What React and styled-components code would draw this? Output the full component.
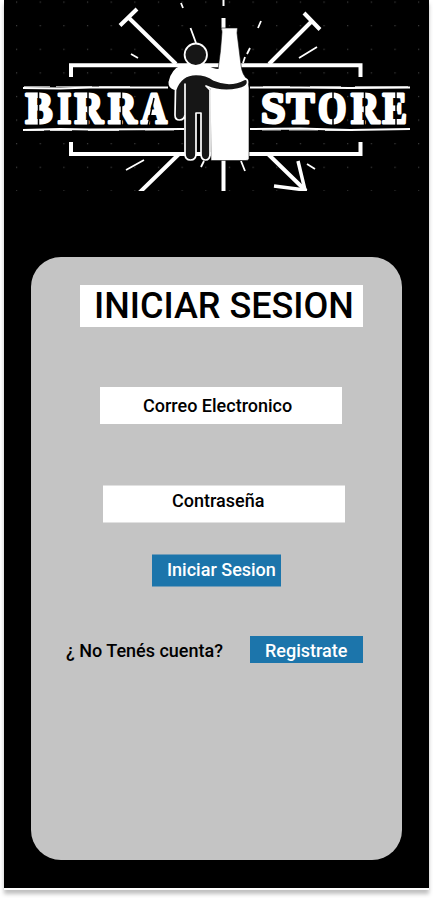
import React from "react";
import styled, { createGlobalStyle } from "styled-components";

const GlobalStyle = createGlobalStyle`
  * { box-sizing: border-box; }
  html { background: #fff; }
  body { margin: 0; font-family: Roboto, sans-serif; }
`;

const Page = styled.div`
  width: 433px;
  height: 898px;
  padding: 0 4px 8px;
  background: #fff;
  overflow: hidden;
`;

const Screen = styled.main`
  width: 425px;
  height: 890px;
  background: #000;
  border-bottom: 2px solid #fff;
  box-shadow: 0 4px 4px rgba(0, 0, 0, 0.25);
  display: flex;
  flex-direction: column;
`;

const Banner = styled.svg`
  display: block;
  width: 425px;
  height: 191px;
  flex: none;
`;

const Card = styled.form`
  width: 371px;
  height: 603px;
  margin: 66px 0 0 27px;
  border-radius: 30px;
  background: #c4c4c4;
  display: flex;
  flex-direction: column;
  align-items: flex-start;
  padding-top: 28px;
`;

const Title = styled.h1`
  margin: 0 0 0 49px;
  width: 283px;
  height: 42px;
  padding-left: 14px;
  background: #fff;
  font-size: 36px;
  font-weight: 500;
  line-height: 42px;
  white-space: nowrap;
`;

const Field = styled.label`
  width: 242px;
  height: ${(p) => p.$h}px;
  margin: ${(p) => p.$margin};
  padding-left: ${(p) => p.$indent}px;
  border: solid #e1e1e1;
  border-width: ${(p) => (p.$edged ? "1px 0" : "0")};
  background: #fff;
  font-size: 18px;
  font-weight: 500;
  line-height: ${(p) => p.$line}px;
`;

const Button = styled.button`
  width: ${(p) => p.$w}px;
  height: ${(p) => p.$h}px;
  margin: ${(p) => p.$margin || 0};
  padding: 0 0 0 15px;
  border: solid #709cb8;
  border-width: ${(p) => (p.$edged ? "1px 0" : "0")};
  background: #1c75ab;
  color: #fff;
  font: 500 18px/${(p) => p.$line}px Roboto, sans-serif;
  text-align: left;
  white-space: nowrap;
  display: flex;
  align-items: flex-start;
`;

const SignupRow = styled.div`
  display: flex;
  width: 100%;
  margin-top: 49px;
  padding-left: 35px;
`;

const Prompt = styled.span`
  width: 184px;
  font-size: 18px;
  font-weight: 500;
  line-height: 30px;
`;

const Lettering = styled.text`
  font-family: "Liberation Serif", serif;
  font-weight: 700;
  font-size: 45px;
  fill: #fff;
  stroke: #fff;
  stroke-width: 3;
  stroke-linejoin: round;
`;

const glyphs = [
  ["B", 25.5, 0.9], ["I", 57.5, 0.78], ["R", 74.5, 0.88], ["R", 108, 0.88], ["A", 141, 0.8],
  ["S", 261, 0.98], ["T", 286.5, 0.93], ["O", 318, 0.81], ["R", 351, 0.87], ["E", 382.5, 0.81],
];

function Logo() {
  return (
    <Banner viewBox="4 0 425 191" role="img" aria-label="Birra Store">
      <defs>
        <pattern id="dots" x="16" y="1.5" width="23.65" height="23.6" patternUnits="userSpaceOnUse">
          <rect x="0" y="0" width="1.2" height="1.2" fill="#404040" />
        </pattern>
      </defs>
      <rect x="4" width="425" height="191" fill="#000" />
      <rect x="4" width="425" height="191" fill="url(#dots)" />
      <g fill="none" stroke="#fff" strokeWidth="4">
        <path d="M71 77V65.3H360.500V77M71 142V154H360.500V142" />
        <path d="M129 18L176 64M120 25.500L137 9M311 22L269 64M304 13L320 29.500" />
        <path d="M179 154L139 193M223.500 160V191M223.500 18V30M268 154L306 191" />
        <path d="M298 161L305 190L274 186" strokeWidth="3.500" />
        <path d="M223.500 0V6" strokeWidth="2" />
        <path d="M131 54L138 58M126 170L144 160M299 58L317 47M307 164L315 169M181 3L183 8M190.500 28L196 43M261 21L258 28M250 48L247 54M245 57L243 63M204 161L201 167M241 161L245 171" strokeWidth="1.8" />
      </g>
      <g stroke="#fff" fill="none">
        <path d="M23 88L60 88.500L90 87.500L168 87.500M250 87.500L300 87.500L350 88L410 87.500M23 130L60 129L90 129.500L184 129M250 129L300 128.500L350 130L410 129" strokeWidth="2" />
        <path d="M24 86.700H50M56 86.700H92M99 86.700H130M263 86.700H290M310 86.700H341M355 86.700H408M26 130.500H44M50 130.500H72M88 130.500H119M145 130H174M262 130H281M289 130H318M325 130.500H353" strokeWidth="0.8" />
      </g>
      {glyphs.map(([letter, x, scale], i) => (
        <Lettering key={i} transform={`translate(${x} 123.300) scale(${scale} 1)`}>{letter}</Lettering>
      ))}
      <g fill="none" stroke="#000" strokeWidth="1.5">
        <path d="M38.500 91V126M88 91V126M121.500 91V126M333 91V126M364.500 91V126M396 91V126M148 126L154 98" />
      </g>
      <path d="M221.500 28H237.500L237 33L241 65Q242 75 248 80L249 88V159Q248 160.500 246 160.500H211L210 82L218 70Q221 50 222 32Z" fill="#fff" stroke="#111" strokeWidth="0.6" />
      <path d="M174.500 90Q168 88 168.500 82Q171 69 182 65Q196 60 207 65Q213 69 219 69L224 85Q207 79 197 76Q185 77 181 84Q178 89 174.500 90Z" fill="#fff" />
      <circle cx="195.800" cy="54.700" r="11.200" fill="#161616" stroke="#fff" strokeWidth="1.800" />
      <path d="M175.500 90Q181 74.500 196 74.500Q206 74.500 214 80Q230 87 244 79.500Q248 78 247.500 83Q247 87 238 89Q222 93 206 86L210 90V154Q210 160 205.500 160Q201 160 201 154V113H196V154Q196 160 190.500 160Q185 160 185 154V84V115Q184 120 179.500 120Q175 120 175 115Z" fill="#161616" stroke="#fff" strokeWidth="1.700" strokeLinejoin="round" />
    </Banner>
  );
}

export default function App() {
  return (
    <>
      <GlobalStyle />
      <Page>
        <Screen>
          <Logo />
          <Card>
            <Title>INICIAR SESION</Title>
            <Field $h={37} $line={38} $indent={43} $margin="60px 0 0 69px">Correo Electronico</Field>
            <Field $edged $h={38} $line={30} $indent={69} $margin="61px 0 0 72px">Contraseña</Field>
            <Button type="button" $edged $w={129} $h={33} $line={30} $margin="31px 0 0 121px">Iniciar Sesion</Button>
            <SignupRow>
              <Prompt>¿ No Tenés cuenta?</Prompt>
              <Button type="button" $w={113} $h={27} $line={30}>Registrate</Button>
            </SignupRow>
          </Card>
        </Screen>
      </Page>
    </>
  );
}
